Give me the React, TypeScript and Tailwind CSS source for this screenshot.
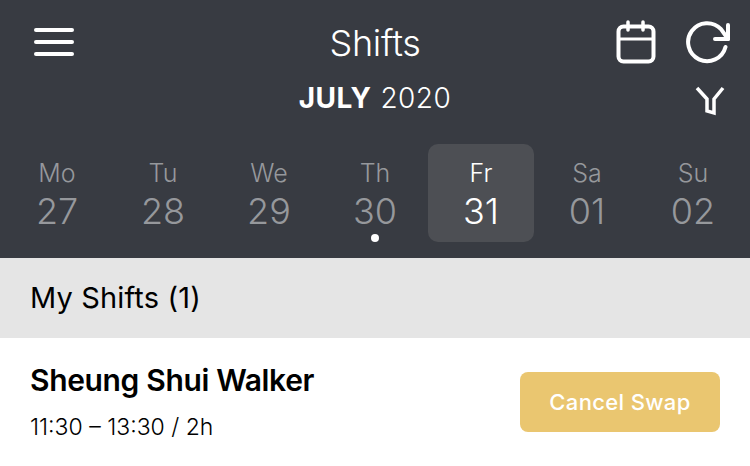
const days = [
  { d: "Mo", n: "27" },
  { d: "Tu", n: "28" },
  { d: "We", n: "29" },
  { d: "Th", n: "30", today: true },
  { d: "Fr", n: "31", active: true },
  { d: "Sa", n: "01" },
  { d: "Su", n: "02" },
];

export default function App() {
  return (
    <div className="w-[750px] h-[466px] overflow-hidden bg-white font-['Inter','Liberation_Sans',sans-serif]">
      <header className="h-[258px] bg-[#383b42] flex flex-col">
        <div className="h-[84px] pl-[34px] pr-[20px] flex items-start justify-between relative">
          <div className="mt-[28px] w-[40px] flex flex-col gap-[8px]">
            <div className="h-[4px] rounded-full bg-white" />
            <div className="h-[4px] rounded-full bg-white" />
            <div className="h-[4px] rounded-full bg-white" />
          </div>
          <div className="absolute left-0 right-0 top-[22px] text-center text-[36px] leading-[42px] font-light text-white tracking-[-0.3px]">
            Shifts
          </div>
          <div className="flex items-start gap-[30px] mt-[20px]">
            <svg width="40" height="44" viewBox="0 0 40 44" fill="none" stroke="white" strokeWidth="4" strokeLinecap="round">
              <rect x="2.5" y="6.5" width="35" height="35" rx="5" />
              <path d="M2.5 19H37.5" strokeWidth="3" />
              <path d="M12 2V10M27 2V10" strokeWidth="3.5" />
            </svg>
            <svg width="44" height="44" viewBox="0 0 44 44" fill="none" stroke="white" strokeWidth="4" strokeLinecap="round" strokeLinejoin="round">
              <path d="M39.5 27A19 19 0 1 1 35 9.2L42 19" />
              <path d="M42 5V19H29" />
            </svg>
          </div>
        </div>
        <div className="h-[28px] relative flex items-center justify-center text-[28px] leading-[28px] text-white tracking-[0.5px]">
          <span className="font-bold">JULY</span>
          <span className="font-light ml-[9px]">2020</span>
          <svg className="absolute left-[695px] top-[2px]" width="30" height="30" viewBox="0 0 30 30" fill="none" stroke="white" strokeWidth="3.5">
            <path d="M2 2L12 13V25L19 27V13L28 2" strokeLinejoin="miter" />
          </svg>
        </div>
        <div className="grid grid-cols-7 px-[4px] mt-[32px]">
          {days.map((x) => (
            <div
              key={x.d}
              className={`relative h-[98px] rounded-[10px] flex flex-col items-center pt-[14px] ${
                x.active ? "bg-[#4d4f54] text-white" : "text-[#96989c]"
              }`}
            >
              <span className="text-[25px] leading-[30px] font-light">{x.d}</span>
              <span className="text-[36px] leading-[44px] mt-[1px] font-light">{x.n}</span>
              {x.today && <span className="absolute top-[90px] w-[8px] h-[8px] rounded-full bg-white" />}
            </div>
          ))}
        </div>
      </header>
      <div className="h-[80px] bg-[#e5e5e5] flex items-center pl-[30px] text-[29px] tracking-[0.15px] text-black">My Shifts (1)</div>
      <div className="flex items-start justify-between pl-[30px] pr-[30px] pt-[23px]">
        <div>
          <div className="text-[30px] leading-[38px] font-semibold text-black tracking-[-0.35px]">Sheung Shui Walker</div>
          <div className="mt-[14px] text-[23px] leading-[28px] font-light text-black">11:30 – 13:30 / 2h</div>
        </div>
        <button className="mt-[11px] w-[200px] h-[60px] rounded-[8px] bg-[#eac670] text-white text-[22px] font-medium tracking-[0.35px]">
          Cancel Swap
        </button>
      </div>
    </div>
  );
}
